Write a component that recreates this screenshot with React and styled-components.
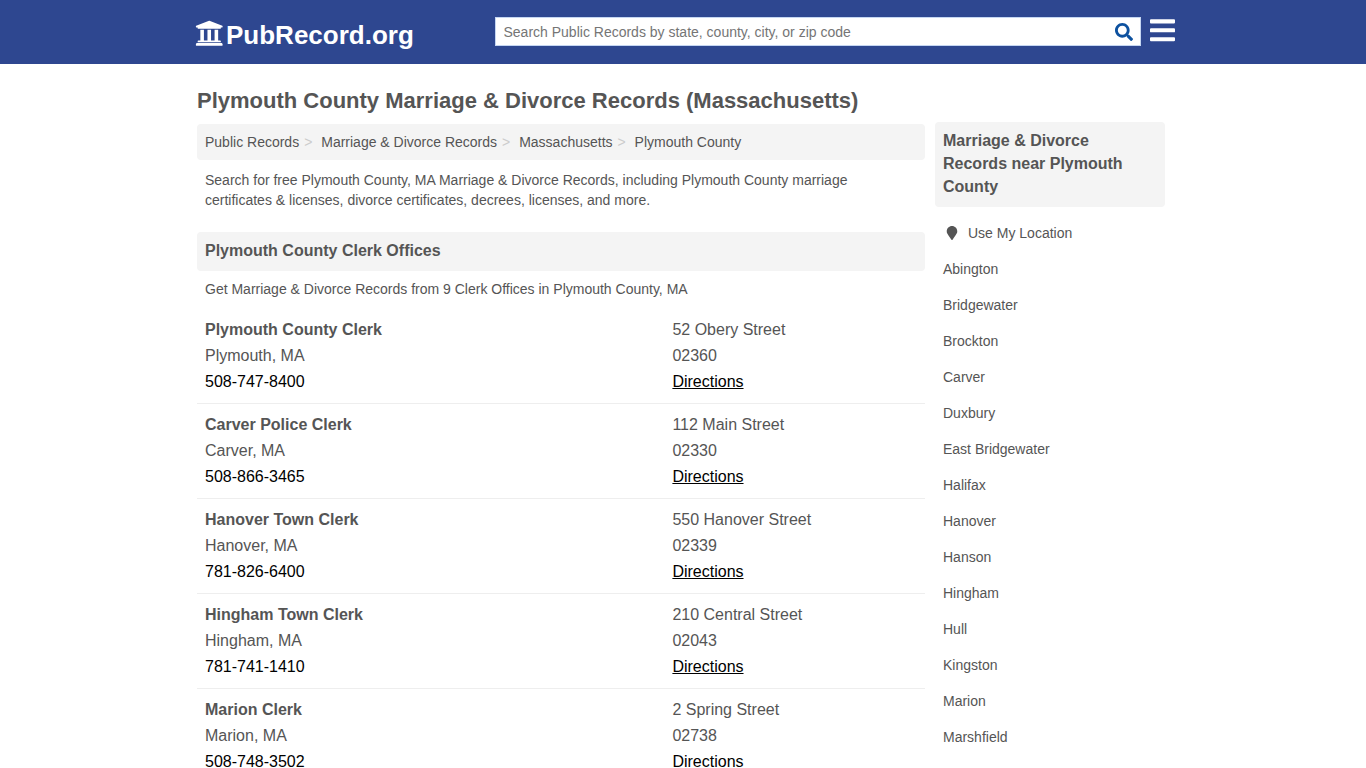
import React from "react";
import styled, { createGlobalStyle } from "styled-components";
import { FaUniversity, FaSearch, FaBars, FaMapMarker } from "react-icons/fa";

const GlobalStyle = createGlobalStyle`
  * {
    box-sizing: border-box;
  }
  html {
    overflow: hidden;
  }
  body {
    margin: 0;
    height: 768px;
    overflow: hidden;
    background: #fff;
    color: #555;
    font-family: "Liberation Sans", Arial, Helvetica, sans-serif;
    font-size: 14px;
    line-height: 20px;
  }
  a {
    color: inherit;
    text-decoration: none;
  }
`;

const Header = styled.header`
  height: 64px;
  background: #2e4790;
`;

const HeaderInner = styled.div`
  display: flex;
  align-items: flex-start;
  width: 980px;
  margin: 0 auto;
`;

const Logo = styled.a`
  display: flex;
  flex: none;
  gap: 3px;
  width: 301px;
  padding: 20px 0 0 2px;
  color: #fff;
  font-size: 26px;
  font-weight: bold;
  line-height: 30px;

  svg {
    width: 28.5px;
    height: 28.5px;
    margin: -0.7px 0 0 -0.5px;
  }
`;

const SearchForm = styled.form`
  display: flex;
  flex: none;
  width: 646px;
  height: 29px;
  margin: 17px 0 0 1px;
  background: #fff;
  border: 1px solid #c5d6f2;
`;

const SearchInput = styled.input`
  flex: 1;
  padding: 0 7.5px;
  border: 0;
  outline: 0;
  background: transparent;
  font-family: inherit;
  font-size: 14px;

  &::placeholder {
    color: #757575;
  }
`;

const SearchButton = styled.button`
  display: flex;
  align-items: center;
  padding: 0 7px;
  border: 0;
  background: transparent;
  color: #0d519f;

  svg {
    width: 18px;
    height: 18px;
  }
`;

const MenuButton = styled.a`
  flex: none;
  margin: 16px 0 0 9px;
  color: #fff;

  svg {
    display: block;
    width: 25px;
    height: 28.6px;
  }
`;

const Page = styled.div`
  display: flex;
  justify-content: space-between;
  width: 972px;
  margin: 0 auto;
  padding-right: 4px;
`;

const Main = styled.main`
  width: 728px;
`;

const Title = styled.h1`
  margin: 22px 0 9px;
  font-size: 22px;
  line-height: 29px;
  white-space: nowrap;
`;

const Breadcrumbs = styled.ul`
  display: flex;
  height: 36px;
  margin: 0;
  padding: 8px;
  list-style: none;
  background: #f4f4f4;
  border-radius: 4px;
`;

const Crumb = styled.li`
  &:not(:last-child)::after {
    content: ">";
    padding: 0 8.9px 0 5px;
    color: #ccc;
  }
`;

const Text = styled.p`
  margin: 0;
  padding: ${(props) => props.$pad};
`;

const SectionTitle = styled.h2`
  margin: 0;
  padding: 7px 8px 9px;
  font-size: 16px;
  line-height: 23px;
  background: #f4f4f4;
  border-radius: 4px;
`;

const Office = styled.div`
  display: grid;
  grid-template-columns: 467.4px 1fr;
  height: 95px;
  padding: 8px;
  border-bottom: 1px solid #eee;
  font-size: 16px;
  line-height: 26px;
`;

const Phone = styled.a`
  color: #000;
`;

const Directions = styled.a`
  color: #000;
  text-decoration: underline;
`;

const Sidebar = styled.aside`
  width: 230px;
  padding-top: 58px;
`;

const Nearby = styled.ul`
  margin: 8px 0 0;
  padding: 0;
  list-style: none;
`;

const Place = styled.li`
  display: flex;
  align-items: center;
  height: 36px;
  padding: 0 8px;

  svg {
    width: 14px;
    height: 14px;
    margin: 0 9px 0 2px;
  }
`;

const crumbs = [
  "Public Records",
  "Marriage & Divorce Records",
  "Massachusetts",
  "Plymouth County",
];

const offices = [
  { name: "Plymouth County Clerk", city: "Plymouth, MA", phone: "508-747-8400", street: "52 Obery Street", zip: "02360" },
  { name: "Carver Police Clerk", city: "Carver, MA", phone: "508-866-3465", street: "112 Main Street", zip: "02330" },
  { name: "Hanover Town Clerk", city: "Hanover, MA", phone: "781-826-6400", street: "550 Hanover Street", zip: "02339" },
  { name: "Hingham Town Clerk", city: "Hingham, MA", phone: "781-741-1410", street: "210 Central Street", zip: "02043" },
  { name: "Marion Clerk", city: "Marion, MA", phone: "508-748-3502", street: "2 Spring Street", zip: "02738" },
];

const places = [
  "Abington",
  "Bridgewater",
  "Brockton",
  "Carver",
  "Duxbury",
  "East Bridgewater",
  "Halifax",
  "Hanover",
  "Hanson",
  "Hingham",
  "Hull",
  "Kingston",
  "Marion",
  "Marshfield",
];

export default function App() {
  return (
    <>
      <GlobalStyle />
      <Header>
        <HeaderInner>
          <Logo href="#">
            <FaUniversity />
            PubRecord.org
          </Logo>
          <SearchForm>
            <SearchInput placeholder="Search Public Records by state, county, city, or zip code" />
            <SearchButton type="button" aria-label="Search">
              <FaSearch />
            </SearchButton>
          </SearchForm>
          <MenuButton href="#" aria-label="Menu">
            <FaBars />
          </MenuButton>
        </HeaderInner>
      </Header>

      <Page>
        <Main>
          <Title>Plymouth County Marriage & Divorce Records (Massachusetts)</Title>
          <Breadcrumbs>
            {crumbs.map((crumb) => (
              <Crumb key={crumb}>
                <a href="#">{crumb}</a>
              </Crumb>
            ))}
          </Breadcrumbs>
          <Text $pad="10px 8px 22px">
            Search for free Plymouth County, MA Marriage & Divorce Records, including Plymouth County marriage
            certificates & licenses, divorce certificates, decrees, licenses, and more.
          </Text>
          <SectionTitle>Plymouth County Clerk Offices</SectionTitle>
          <Text $pad="8px 8px 10px">
            Get Marriage & Divorce Records from 9 Clerk Offices in Plymouth County, MA
          </Text>
          {offices.map((office) => (
            <Office key={office.name}>
              <strong>{office.name}</strong>
              <span>{office.street}</span>
              <span>{office.city}</span>
              <span>{office.zip}</span>
              <Phone href="#">{office.phone}</Phone>
              <Directions href="#">Directions</Directions>
            </Office>
          ))}
        </Main>

        <Sidebar>
          <SectionTitle>Marriage & Divorce Records near Plymouth County</SectionTitle>
          <Nearby>
            <Place>
              <FaMapMarker />
              <a href="#">Use My Location</a>
            </Place>
            {places.map((place) => (
              <Place key={place}>
                <a href="#">{place}</a>
              </Place>
            ))}
          </Nearby>
        </Sidebar>
      </Page>
    </>
  );
}
